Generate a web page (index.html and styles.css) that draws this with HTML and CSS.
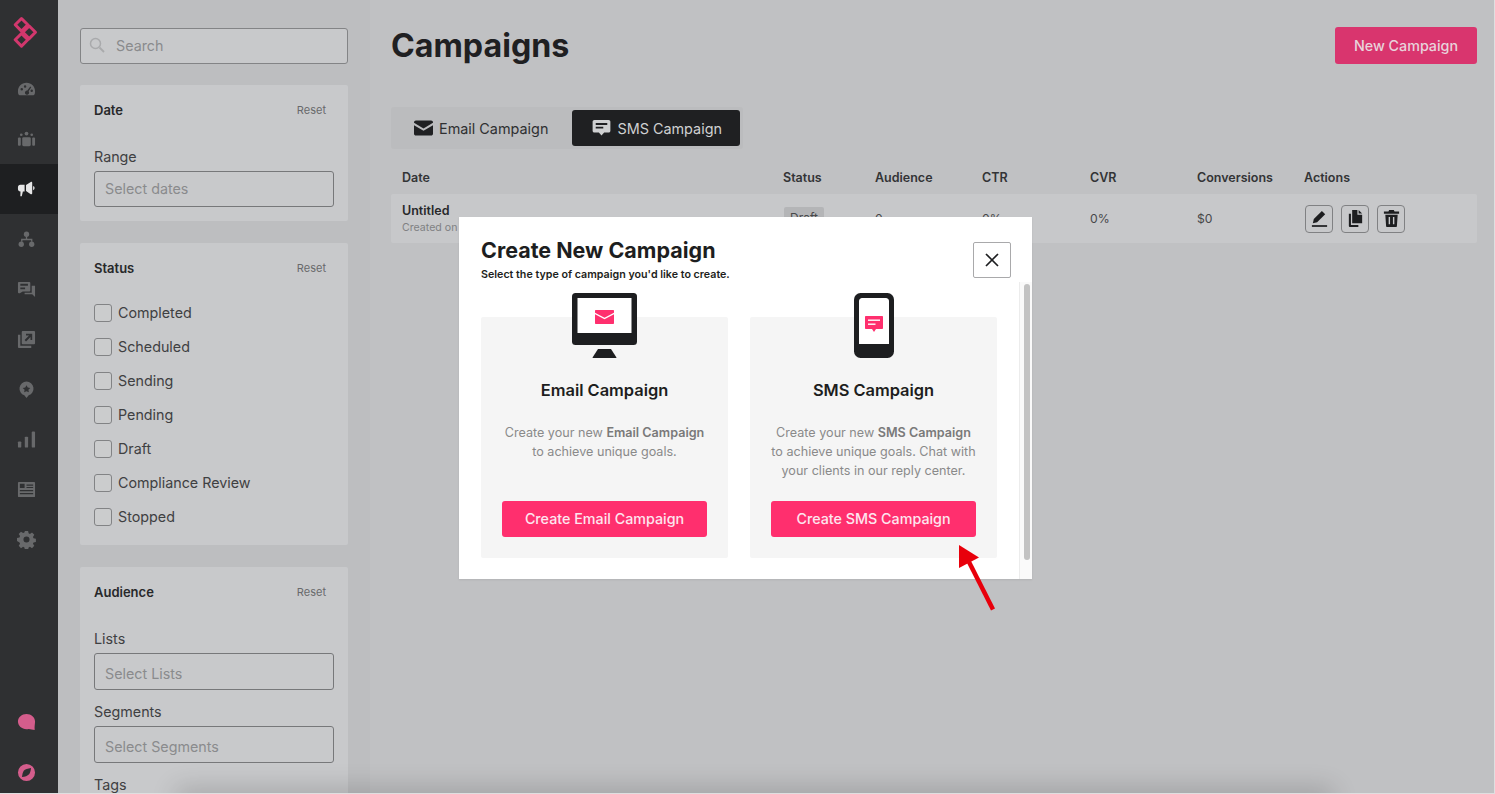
FILE: index.html
```html
<!DOCTYPE html>
<html lang="en">
<head>
<meta charset="utf-8">
<title>Campaigns</title>
<link rel="stylesheet" href="styles.css">
</head>
<body>
<div class="app">
  <nav class="sidebar">
    <div class="logo">
      <svg width="26" height="32" viewBox="0 0 26 32"><g fill="none" stroke="#d2376d" stroke-width="3" stroke-linejoin="round"><path d="M8.500 2.500 14.800 8.800 8.500 15.100 2.200 8.800z"/><path d="M16.200 10 22.500 16.300 16.200 22.600 9.900 16.300z"/><path d="M8.500 17.500 14.800 23.800 8.500 30.100 2.200 23.800z"/></g></svg>
    </div>
    <a class="nav-item"><svg class="nav-icon" viewBox="0 0 20 20"><path fill-rule="evenodd" d="M10 3C4.600 3 1 7 1 12c0 1.500.3 2.600.8 3.500.2.300.5.500.9.500h14.600c.4 0 .7-.2.900-.5.500-.9.800-2 .8-3.500 0-5-3.600-9-9-9zM5 8.500a1.300 1.300 0 1 1 0 2.600 1.300 1.300 0 0 1 0-2.600zM8.500 5.600a1.300 1.300 0 1 1 0 2.600 1.300 1.300 0 0 1 0-2.600zM14 6.800l1 .7-2.800 4.300a2.200 2.200 0 1 1-1.300-.7L14 6.800zM15.500 10a1.300 1.300 0 1 1 0 2.600 1.300 1.300 0 0 1 0-2.600z"/></svg></a>
    <a class="nav-item"><svg class="nav-icon" viewBox="0 0 20 20"><circle cx="10" cy="3.800" r="2"/><circle cx="4.500" cy="5" r="1.400"/><circle cx="15.500" cy="5" r="1.400"/><rect x="5.500" y="7.500" width="9" height="9.500" rx="1.500"/><rect x="1" y="8" width="3" height="8.500" rx="1"/><rect x="16" y="8" width="3" height="8.500" rx="1"/></svg></a>
    <a class="nav-item is-active"><svg class="nav-icon" viewBox="0 0 20 20"><path d="M1 7.500c0-1.400 1-2.500 2.500-2.500H8v7H6.200L5 17H3.500l.2-5H3.500C2 12 1 10.900 1 9.500z"/><path d="M9.500 5.200 14.500 2c.6-.3 1.500 0 1.500.9V14c0 .9-.9 1.300-1.500.9l-5-3.200z"/><path d="M17 6.200a2.400 2.400 0 0 1 0 4.500z"/></svg></a>
    <a class="nav-item"><svg class="nav-icon" viewBox="0 0 20 20"><circle cx="10" cy="4.500" r="2.800"/><circle cx="4.500" cy="15" r="2.800"/><circle cx="15.500" cy="15" r="2.800"/><path d="M9.300 6h1.400v3.300h5.500v3h-1.400v-1.600H5.700v1.600H4.300v-3h5z"/></svg></a>
    <a class="nav-item"><svg class="nav-icon" viewBox="0 0 20 20"><path fill-rule="evenodd" d="M2 2h11c.6 0 1 .4 1 1v8c0 .6-.4 1-1 1H6l-3 2H2c-.6 0-1-.4-1-1V3c0-.6.4-1 1-1zm1.500 2v2h8V4zm0 3.800v2h5v-2z"/><path d="M15.500 6H19v12l-3-3H8v-1.500h7.500z"/></svg></a>
    <a class="nav-item"><svg class="nav-icon" viewBox="0 0 20 20"><path fill-rule="evenodd" d="M6 1h12c.6 0 1 .4 1 1v12c0 .6-.4 1-1 1H6c-.6 0-1-.4-1-1V2c0-.6.4-1 1-1zm3.500 3v1.800h3.200L8 10.500 9.500 12l4.700-4.700V10.500H16V4z"/><path d="M1 5h2.500v11.500H15V19H2c-.6 0-1-.4-1-1z"/></svg></a>
    <a class="nav-item"><svg class="nav-icon" viewBox="0 0 20 20"><path fill-rule="evenodd" d="M10 1.500a7.500 7.500 0 0 1 2.300 14.600L10 19l-2.300-2.900A7.500 7.500 0 0 1 10 1.500zm0 4 1.300 2.500 2.700.4-2 1.900.5 2.700L10 11.800l-2.500 1.200.5-2.700-2-1.900 2.700-.4z"/></svg></a>
    <a class="nav-item"><svg class="nav-icon" viewBox="0 0 20 20"><rect x="1" y="12" width="3.500" height="6.500" rx="1"/><rect x="8.200" y="7" width="3.500" height="11.500" rx="1"/><rect x="15.500" y="1.500" width="3.500" height="17" rx="1"/></svg></a>
    <a class="nav-item"><svg class="nav-icon" viewBox="0 0 20 20"><path fill-rule="evenodd" d="M2 2h16c.6 0 1 .4 1 1v14c0 .6-.4 1-1 1H2c-.6 0-1-.4-1-1V3c0-.6.4-1 1-1zm1 2v4.500h5V4zm7 .800V6h7V4.800zm0 2.500v1.200h7V7.300zM3 10.500v1.300h14v-1.300zm0 3.300v1.300h14v-1.300z"/></svg></a>
    <a class="nav-item"><svg class="nav-icon" viewBox="0 0 20 20"><path fill-rule="evenodd" d="M8.300 1h3.400l.5 2.500 1.400.6 2.200-1.400 2.400 2.400-1.400 2.200.6 1.400 2.500.5v3.400l-2.500.5-.6 1.400 1.400 2.200-2.400 2.400-2.200-1.400-1.400.6-.5 2.500H8.300l-.5-2.500-1.400-.6-2.200 1.400-2.400-2.400 1.400-2.200-.6-1.400L0 11.700V8.300l2.600-.5.600-1.400-1.400-2.200 2.400-2.400 2.200 1.400 1.400-.6zM10 6.800a3.200 3.200 0 1 0 0 6.400 3.200 3.200 0 0 0 0-6.400z"/></svg></a>
    <div class="nav-bottom">
      <a class="nav-item nav-item--small"><svg class="nav-icon nav-icon--pink" viewBox="0 0 20 20"><path d="M10 1c5 0 9 3.400 9 8 0 2.500-.7 4.300-.4 9-2.300-.4-4.400-.9-6.300-1.200-.8.100-1.500.2-2.300.2-5 0-9-3.400-9-8s4-8 9-8z"/></svg></a>
      <a class="nav-item nav-item--small"><svg class="nav-icon nav-icon--pink" viewBox="0 0 20 20"><path fill-rule="evenodd" d="M10 1a9 9 0 1 1 0 18 9 9 0 0 1 0-18zm4.800 4.200c-3.500.4-6.500 1.300-7.700 2.900-.9 1.300-1.500 3.800-1.900 6.700 3.200-.4 6-1.100 7.500-2.900 1.100-1.400 1.700-3.800 2.100-6.700z"/></svg></a>
    </div>
  </nav>

  <aside class="filters">
    <div class="search">
      <svg class="search-icon" viewBox="0 0 16 16"><circle cx="6.500" cy="6.500" r="5" fill="none" stroke="#a9aaac" stroke-width="1.500"/><path d="m10.500 10.500 4.500 4.500" stroke="#a9aaac" stroke-width="1.800"/></svg>
      <span class="placeholder">Search</span>
    </div>
    <section class="filter-card">
      <header class="filter-head"><h3>Date</h3><span class="reset">Reset</span></header>
      <div class="field-label field-label--first">Range</div>
      <div class="select select--short"><span class="placeholder">Select dates</span></div>
    </section>
    <section class="filter-card filter-card--status">
      <header class="filter-head"><h3>Status</h3><span class="reset">Reset</span></header>
      <ul class="checks">
        <li><span class="box"></span><span class="check-text">Completed</span></li>
        <li><span class="box"></span><span class="check-text">Scheduled</span></li>
        <li><span class="box"></span><span class="check-text">Sending</span></li>
        <li><span class="box"></span><span class="check-text">Pending</span></li>
        <li><span class="box"></span><span class="check-text">Draft</span></li>
        <li><span class="box"></span><span class="check-text">Compliance Review</span></li>
        <li><span class="box"></span><span class="check-text">Stopped</span></li>
      </ul>
    </section>
    <section class="filter-card">
      <header class="filter-head"><h3>Audience</h3><span class="reset">Reset</span></header>
      <div class="field-label field-label--first">Lists</div>
      <div class="select"><span class="placeholder">Select Lists</span></div>
      <div class="field-label">Segments</div>
      <div class="select"><span class="placeholder">Select Segments</span></div>
      <div class="field-label">Tags</div>
    </section>
  </aside>

  <main class="main">
    <header class="page-head">
      <h1>Campaigns</h1>
      <button class="new-btn">New Campaign</button>
    </header>
    <div class="tabs">
      <div class="tab">
        <svg class="tab-icon" viewBox="0 0 20 16"><path d="M2 0h16c1.100 0 2 .9 2 2v.6l-10 6-10-6V2C0 .9.900 0 2 0z"/><path d="M0 5.200 10 11l10-5.800V14c0 1.100-.9 2-2 2H2c-1.100 0-2-.9-2-2z"/></svg>
        Email Campaign
      </div>
      <div class="tab is-active">
        <svg class="tab-icon" viewBox="0 0 20 18"><path fill-rule="evenodd" d="M2 0h16c1.100 0 2 .9 2 2v10c0 1.100-.9 2-2 2h-5l-3 3.500L7 14H2c-1.100 0-2-.9-2-2V2C0 .9.900 0 2 0zm1.500 3.500v2h13v-2zm0 4.200v2h8.500v-2z"/></svg>
        SMS Campaign
      </div>
    </div>
    <div class="table-grid table-head">
      <span>Date</span><span>Status</span><span>Audience</span><span>CTR</span><span>CVR</span><span>Conversions</span><span>Actions</span>
    </div>
    <div class="table-grid table-row">
      <div class="name-cell"><strong>Untitled</strong><small>Created on</small></div>
      <div><span class="badge">Draft</span></div>
      <div>0</div><div>0%</div><div>0%</div><div>$0</div>
      <div class="actions">
        <button class="act"><svg viewBox="0 0 20 20"><path d="M12.500 2 16 5.500 7.500 14 3 15l1-4.500z"/><rect x="2" y="17" width="16" height="1.800"/></svg></button>
        <button class="act"><svg viewBox="0 0 20 20"><path d="M6.500 1H12v5h5v9H6.500z"/><path d="M13.300 1 17 4.700h-3.700z"/><path d="M3 5h2.200v11.800H13V19H4c-.6 0-1-.4-1-1z"/></svg></button>
        <button class="act"><svg viewBox="0 0 20 20"><path d="M7.500 1h5l.7 1.500H18V5H2V2.500h4.800z"/><path fill-rule="evenodd" d="M3.500 6h13l-.8 12c0 .6-.5 1-1 1H5.300c-.5 0-1-.4-1-1zM7 8.500V16h1.500V8.500zm4.500 0V16H13V8.500z"/></svg></button>
      </div>
    </div>
  </main>

  <div class="edge-shadow"></div>

  <div class="modal" role="dialog">
    <header class="modal-head">
      <div>
        <h2>Create New Campaign</h2>
        <p>Select the type of campaign you'd like to create.</p>
      </div>
      <button class="close" aria-label="Close"><svg viewBox="0 0 14 14"><path d="m1 1 12 12M13 1 1 13" stroke="#1d1e20" stroke-width="1.700" fill="none"/></svg></button>
    </header>
    <div class="modal-body">
      <div class="cards">
        <article class="type-card">
          <svg class="type-icon" width="65" height="65" viewBox="0 0 65 65">
            <rect width="65" height="52" rx="3.500" fill="#1d1e20"/>
            <rect x="5.500" y="5" width="54" height="35" fill="#fff"/>
            <path d="M24 17h17c.6 0 1 .4 1 1v1.800l-9.500 5-9.500-5V18c0-.6.400-1 1-1z" fill="#ff2f6e"/>
            <path d="M23 21.300l9.500 5 9.500-5V30c0 .6-.4 1-1 1H24c-.6 0-1-.4-1-1z" fill="#ff2f6e"/>
            <path d="M26 56h13l5.500 8.500c0 .3-.2.500-.5.500H21c-.3 0-.5-.2-.5-.5z" fill="#1d1e20"/>
          </svg>
          <h3>Email Campaign</h3>
          <p>Create your new <b>Email Campaign</b><br>to achieve unique goals.</p>
          <button class="create-btn">Create Email Campaign</button>
        </article>
        <article class="type-card">
          <svg class="type-icon" width="40" height="65" viewBox="0 0 40 65">
            <rect width="40" height="65" rx="6.500" fill="#1d1e20"/>
            <path d="M8 5h24c1.600 0 3 1.400 3 3v43H5V8c0-1.600 1.400-3 3-3z" fill="#fff"/>
            <path d="M12 23h16c.6 0 1 .4 1 1v11c0 .6-.4 1-1 1h-6l-2 3-2-3h-6c-.6 0-1-.4-1-1V24c0-.6.400-1 1-1z" fill="#ff2f6e"/>
            <rect x="14" y="26.500" width="12" height="1.400" fill="#fff"/>
            <rect x="14" y="30.500" width="7.500" height="1.400" fill="#fff"/>
          </svg>
          <h3>SMS Campaign</h3>
          <p>Create your new <b>SMS Campaign</b><br>to achieve unique goals. Chat with<br>your clients in our reply center.</p>
          <button class="create-btn">Create SMS Campaign</button>
        </article>
      </div>
      <div class="scroll-track"><div class="scroll-thumb"></div></div>
    </div>
  </div>

  <svg class="arrow" width="44" height="74" viewBox="0 0 44 74">
    <path d="M35 65.500 11 18" stroke="#e8000b" stroke-width="4.500" fill="none"/>
    <path d="M1 1 21 13.500 1 24z" fill="#e8000b"/>
  </svg>
</div>
</body>
</html>
```

FILE: styles.css
```css
* { box-sizing: border-box; }
html, body { margin: 0; height: 100%; }
body {
  background: #dfdfe0;
  font-family: Inter, "Liberation Sans", sans-serif;
  color: #333436;
  overflow: hidden;
}
h1, h2, h3, p, ul { margin: 0; padding: 0; }
button { font-family: inherit; cursor: pointer; }

.app {
  position: relative;
  display: flex;
  width: 1494px;
  height: 793px;
  overflow: hidden;
  background: #c0c1c3;
}

/* Sidebar */
.sidebar {
  flex: none;
  width: 58px;
  display: flex;
  flex-direction: column;
  background: #2f3032;
}
.logo {
  height: 64px;
  display: flex;
  align-items: center;
  justify-content: center;
  padding-right: 6px;
}
.nav-item {
  flex: none;
  height: 50px;
  display: flex;
  align-items: center;
  justify-content: center;
  padding-right: 6px;
  padding-top: 1px;
}
.nav-item.is-active { background: #1e1f21; }
.nav-icon { width: 19px; height: 19px; fill: #68696b; }
.nav-item.is-active .nav-icon { fill: #e6e6e7; }
.nav-icon--pink { fill: #d45d8c; }
.nav-bottom {
  margin-top: auto;
  display: flex;
  flex-direction: column;
  gap: 8px;
}
.nav-item--small { height: 42px; }

/* Filters */
.filters {
  flex: none;
  width: 312px;
  padding: 28px 22px 0;
  background: #bdbec0;
  overflow: hidden;
}
.search {
  display: flex;
  align-items: center;
  gap: 11px;
  height: 36px;
  margin-bottom: 21px;
  padding: 0 8px 2px;
  background: #c8c9cb;
  border: 1px solid #838486;
  border-radius: 3px;
}
.search-icon { width: 16px; height: 16px; flex: none; }
.placeholder { font-size: 14.3px; color: #8a8b8d; }
.filter-card {
  margin-bottom: 22px;
  padding: 14px;
  background: #c8c9cb;
  border-radius: 2px;
}
.filter-card--status { padding-bottom: 11px; }
.filter-head {
  display: flex;
  align-items: center;
  justify-content: space-between;
  height: 22px;
  padding-right: 8px;
}
.filter-head h3 { font-size: 13px; font-weight: 600; color: #27282a; }
.reset { font-size: 11px; color: #68696b; }
.field-label {
  height: 20px;
  margin-top: 12px;
  margin-bottom: 4px;
  font-size: 14.3px;
  line-height: 20px;
  color: #3f4042;
}
.field-label--first { margin-top: 26px; }
.select {
  display: flex;
  align-items: center;
  height: 37px;
  padding: 3px 10px 0;
  border: 1px solid #77787a;
  border-radius: 3px;
}
.select--short { height: 36px; padding: 0 10px 1px; }
.checks { list-style: none; margin-top: 17px; }
.checks li {
  display: flex;
  align-items: center;
  gap: 6px;
  height: 34px;
  font-size: 14.3px;
  color: #3f4042;
}
.check-text { padding-bottom: 2px; }
.box {
  width: 18px;
  height: 18px;
  border: 1px solid #828385;
  border-radius: 3px;
  background: #cbcccd;
}

/* Main */
.main {
  flex: 1;
  min-width: 0;
  padding: 27px 17px 0 21px;
  background: #c0c1c3;
}
.page-head {
  display: flex;
  align-items: center;
  justify-content: space-between;
  height: 37px;
}
h1 { font-size: 32.2px; font-weight: 700; color: #1f2022; }
.new-btn {
  width: 142px;
  height: 37px;
  border: 0;
  border-radius: 3px;
  background: #d9356e;
  color: #e8d3db;
  font-size: 14.3px;
  font-weight: 500;
}
.tabs {
  display: inline-flex;
  align-items: center;
  gap: 3px;
  height: 42px;
  margin-top: 43px;
  padding: 3px;
  background: #bbbcbe;
  border-radius: 3px;
  vertical-align: top;
}
.tab {
  display: flex;
  align-items: center;
  gap: 6px;
  height: 36px;
  padding: 0 21px 0 20px;
  font-size: 14.4px;
  color: #2f3032;
  border-radius: 3px;
}
.tab.is-active {
  padding: 0 18px 0 20px;
  background: #1f2022;
  color: #cfd0d1;
}
.tab-icon { width: 19px; height: 16px; fill: currentColor; }
.tab:not(.is-active) .tab-icon { fill: #1f2022; }
.table-grid {
  display: grid;
  grid-template-columns: 381px 92px 107px 108px 107px 107px 1fr;
  padding-left: 11px;
}
.table-head {
  height: 20px;
  margin-top: 18px;
  margin-bottom: 7px;
  align-items: center;
  font-size: 12.5px;
  font-weight: 600;
  color: #333436;
}
.table-row {
  height: 49px;
  align-items: center;
  background: #c7c8ca;
  font-size: 12.2px;
  color: #47484a;
  border-radius: 2px;
}
.name-cell { display: flex; flex-direction: column; gap: 3px; }
.name-cell strong { font-size: 12.5px; font-weight: 600; color: #27282a; }
.name-cell small { font-size: 10.6px; color: #808183; }
.badge {
  display: inline-block;
  margin: 0 0 3px 1px;
  padding: 3px 6px;
  background: #b4b5b7;
  border-radius: 2px;
  font-size: 12px;
}
.actions { display: flex; gap: 8px; margin-left: 1px; }
.act {
  display: flex;
  align-items: center;
  justify-content: center;
  width: 28px;
  height: 28px;
  padding: 0;
  background: #c7c8ca;
  border: 1px solid #808183;
  border-radius: 4px;
}
.act svg { width: 19px; height: 19px; fill: #1d1e20; }

.edge-shadow {
  position: absolute;
  left: 180px;
  right: 165px;
  bottom: -12px;
  height: 12px;
  box-shadow: 0 0 26px 4px rgba(0, 0, 0, .2);
}

/* Modal */
.modal {
  position: absolute;
  left: 459px;
  top: 217px;
  width: 573px;
  height: 362px;
  display: flex;
  flex-direction: column;
  background: #fff;
  box-shadow: 0 1px 2px rgba(0, 0, 0, .08);
}
.modal-head {
  flex: none;
  display: flex;
  justify-content: space-between;
  height: 65px;
  padding: 20px 21px 0 22px;
}
.modal-head h2 { font-size: 21.5px; font-weight: 700; line-height: 26px; color: #1d1e20; }
.modal-head p { margin-top: 5px; font-size: 10.7px; font-weight: 600; line-height: 14px; color: #1d1e20; }
.close {
  width: 38px;
  height: 36px;
  margin-top: 5px;
  padding: 0;
  display: flex;
  align-items: center;
  justify-content: center;
  background: #fff;
  border: 1px solid #a9a9ab;
  border-radius: 2px;
}
.close svg { width: 14px; height: 14px; }
.modal-body { flex: 1; min-height: 0; display: flex; }
.cards {
  flex: 1;
  display: flex;
  gap: 22px;
  padding: 35px 22px 21px;
}
.type-card {
  flex: 1;
  display: flex;
  flex-direction: column;
  align-items: center;
  padding: 0 21px 21px;
  background: #f5f5f5;
  border-radius: 2px;
  text-align: center;
}
.type-icon { flex: none; margin-top: -24px; }
.type-card h3 {
  margin-top: 22px;
  font-size: 16.4px;
  font-weight: 600;
  line-height: 20px;
  color: #1d1e20;
}
.type-card p {
  margin-top: 23px;
  font-size: 12.6px;
  line-height: 19px;
  color: #8a8a8a;
  white-space: nowrap;
}
.type-card p b { font-weight: 600; color: #7a7a7a; }
.create-btn {
  width: 205px;
  height: 36px;
  margin-top: auto;
  padding: 0 0 2px;
  border: 0;
  border-radius: 3px;
  background: #ff2f6e;
  color: #fde6ee;
  font-size: 14.3px;
  font-weight: 500;
  flex: none;
}
.scroll-track {
  flex: none;
  width: 13px;
  padding: 2px 2px 19px 4px;
  border-left: 1px solid #ececec;
  background: #fafafa;
}
.scroll-thumb { height: 100%; background: #c3c3c3; border-radius: 4px; }

.arrow { position: absolute; left: 958px; top: 544px; }
```
